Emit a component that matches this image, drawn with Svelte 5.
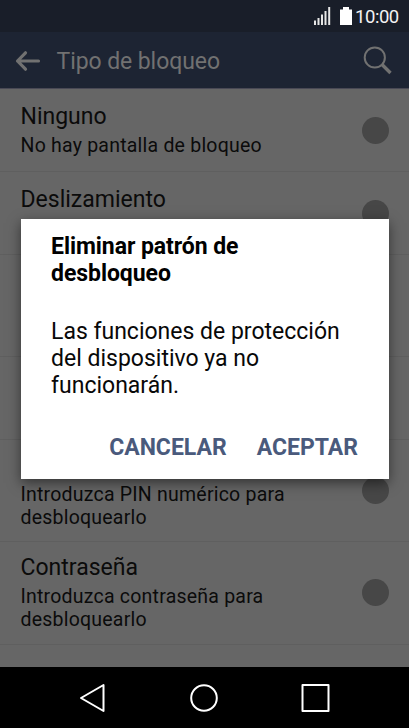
<script lang="ts">
	type Row = { title?: string; lines?: string[]; height: number; tall?: boolean };

	const rows: Row[] = [
		{ title: 'Ninguno', lines: ['No hay pantalla de bloqueo'], height: 83 },
		{ title: 'Deslizamiento', height: 83 },
		{ height: 102, tall: true },
		{ height: 83 },
		{ lines: ['Introduzca PIN numérico para', 'desbloquearlo'], height: 102, tall: true },
		{ title: 'Contraseña', lines: ['Introduzca contraseña para', 'desbloquearlo'], height: 103, tall: true }
	];
</script>

<div class="phone">
	<div class="status">
		<svg class="signal" width="17" height="19" viewBox="0 0 17 19" aria-hidden="true">
			<path d="M1 13.5V18M4.5 11V18M8 7.5V18M11.5 4V18M15.2 0V18" />
		</svg>
		<svg class="battery" width="12" height="19" viewBox="0 0 12 19" aria-hidden="true">
			<path d="M0 2.5H3V0H9V2.5H12V18H0Z" />
		</svg>
		<span class="clock">10:00</span>
	</div>

	<header class="bar">
		<svg class="back" width="26" height="22" viewBox="0 0 26 22" aria-hidden="true">
			<path d="M10.5 2.8L2.5 11L10.5 19.2M2.5 11H23.5" />
		</svg>
		<h1>Tipo de bloqueo</h1>
		<svg class="search" width="30" height="30" viewBox="0 0 30 30" aria-hidden="true">
			<circle cx="11.8" cy="11.5" r="10.1" />
			<path d="M19 18.5L27.5 27" />
		</svg>
	</header>

	<main>
		{#each rows as row}
			<div class="row" class:tall={row.tall} style="height: {row.height}px">
				<div class="text">
					<div class="title">{row.title ?? ''}</div>
					{#each row.lines ?? [] as line}
						<div class="line">{line}</div>
					{/each}
				</div>
				<span class="radio"></span>
			</div>
		{/each}
	</main>

	<nav>
		<svg width="28" height="30" viewBox="0 0 28 30" aria-hidden="true">
			<path d="M24.5 2V28L2 15Z" />
		</svg>
		<svg width="30" height="30" viewBox="0 0 30 30" aria-hidden="true">
			<circle cx="15" cy="15" r="12.8" />
		</svg>
		<svg width="30" height="30" viewBox="0 0 30 30" aria-hidden="true">
			<rect x="2.5" y="2" width="26" height="26" />
		</svg>
	</nav>

	<div class="dialog" role="dialog" aria-modal="true" aria-labelledby="dialog-title">
		<h2 id="dialog-title">Eliminar patrón de<br />desbloqueo</h2>
		<p>Las funciones de protección<br />del dispositivo ya no<br />funcionarán.</p>
		<div class="actions">
			<button type="button">CANCELAR</button>
			<button type="button">ACEPTAR</button>
		</div>
	</div>
</div>

<style>
	:global(body) {
		margin: 0;
		background: #000;
	}

	.phone {
		position: relative;
		display: flex;
		flex-direction: column;
		width: 409px;
		height: 728px;
		overflow: hidden;
		background: #666;
		color: #0b0b0b;
		font-family: Roboto, sans-serif;
	}

	svg {
		display: block;
		flex: none;
		fill: none;
	}

	.status {
		display: flex;
		box-sizing: border-box;
		height: 32px;
		padding: 7px 0 0 314px;
		background: #191e29;
		color: #f3f3f3;
	}

	.signal {
		stroke: #e6e6e6;
		stroke-width: 2;
	}

	.battery {
		margin-left: 9px;
		fill: #fff;
	}

	.clock {
		margin-left: 3px;
		font-size: 18.5px;
		line-height: 20px;
		letter-spacing: -0.45px;
	}

	.bar {
		display: flex;
		align-items: center;
		box-sizing: border-box;
		height: 57px;
		padding: 2px 16px 0 15px;
		border-bottom: 1px solid #494955;
		background: #1d2433;
	}

	.back {
		stroke: #717171;
		stroke-width: 3.2;
		stroke-linecap: round;
		stroke-linejoin: round;
	}

	h1 {
		flex: 1;
		margin: 2px 0 0 15.5px;
		color: #717171;
		font-size: 23px;
		font-weight: 400;
		line-height: 28px;
		letter-spacing: -0.08px;
	}

	.search {
		stroke: #717171;
		stroke-width: 2;
	}

	.search path {
		stroke-width: 3.4;
	}

	main {
		flex: 1;
	}

	.row {
		display: flex;
		align-items: center;
		justify-content: space-between;
		box-sizing: border-box;
		padding: 0 20px 0 20.5px;
		border-bottom: 1px solid #5f5f5f;
	}

	.row:last-child {
		padding-bottom: 2px;
	}

	.text {
		align-self: flex-start;
		padding-top: 14px;
	}

	.tall .text {
		padding-top: 12px;
	}

	.title {
		height: 31px;
		font-size: 23px;
		line-height: 28px;
	}

	.line {
		font-size: 19.5px;
		line-height: 23px;
		letter-spacing: 0.22px;
	}

	.radio {
		width: 27px;
		height: 27px;
		border-radius: 50%;
		background: #474747;
	}

	nav {
		display: flex;
		align-items: center;
		justify-content: space-between;
		box-sizing: border-box;
		height: 61px;
		padding: 0 79px;
		background: #000;
	}

	nav svg {
		stroke: #fff;
		stroke-width: 2;
		stroke-linejoin: round;
	}

	.dialog {
		position: absolute;
		top: 219px;
		left: 20.5px;
		box-sizing: border-box;
		width: 368px;
		height: 260px;
		padding: 14px 30.5px 0 30.5px;
		background: #fff;
		box-shadow: 0 4px 12px rgba(0, 0, 0, 0.5);
		color: #080808;
	}

	h2,
	p {
		margin: 0;
		font-size: 23px;
		line-height: 27.3px;
	}

	h2 {
		color: #000;
		font-weight: 700;
		letter-spacing: -0.06px;
	}

	p {
		margin-top: 30px;
	}

	.actions {
		display: flex;
		justify-content: flex-end;
		gap: 30px;
		margin-top: 34.5px;
	}

	button {
		padding: 0;
		border: 0;
		background: none;
		color: #4a5a7c;
		font: 700 23px/28px Roboto, sans-serif;
	}
</style>
